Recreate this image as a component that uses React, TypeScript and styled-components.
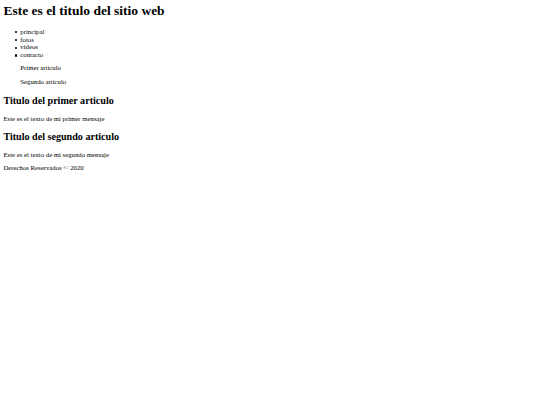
import styled, { createGlobalStyle } from "styled-components";

// The reference is a default-styled page shown at roughly 0.42 scale,
// so every default size below is the browser default times that factor.
const GlobalStyle = createGlobalStyle`
	body {
		margin: 3.4px;
		font-family: "Liberation Serif", "Times New Roman", serif;
		font-size: 6.75px;
		line-height: 1.15;
		color: #000;
		background: #fff;
	}
`;

const SiteTitle = styled.h1`
	font-size: 13.5px;
	font-weight: bold;
	margin: 0 0 9px;
`;

const NavList = styled.ul`
	list-style: none;
	margin: 6.75px 0 5px;
	padding-left: 16.9px;
`;

const NavItem = styled.li`
	position: relative;

	&::before {
		content: "";
		position: absolute;
		left: -5.5px;
		top: 3.3px;
		width: 2.2px;
		height: 2.2px;
		border-radius: 50%;
		background: #000;
	}
`;

const Aside = styled.aside`
	margin: 0 16.9px;

	p {
		margin: 5px 0 6.75px;
	}
`;

const Article = styled.article`
	h2 {
		font-size: 10.1px;
		font-weight: bold;
		margin: 8.4px 0;
	}

	p {
		margin: 6.75px 0 6px;
	}
`;

const Footer = styled.footer`
	p {
		margin: 5.5px 0;
	}
`;

const links = ["principal", "fotos", "videos", "contacto"];

const articles = [
	{ title: "Titulo del primer articulo", text: "Este es el texto de mi primer mensaje" },
	{ title: "Titulo del segundo articulo", text: "Este es el texto de mi segundo mensaje" },
];

export default function App() {
	return (
		<>
			<GlobalStyle />
			<header>
				<SiteTitle>Este es el titulo del sitio web</SiteTitle>
			</header>
			<nav>
				<NavList>
					{links.map((link) => (
						<NavItem key={link}>{link}</NavItem>
					))}
				</NavList>
			</nav>
			<Aside>
				<p>Primer articulo</p>
				<p>Segundo articulo</p>
			</Aside>
			{articles.map((a) => (
				<Article key={a.title}>
					<h2>{a.title}</h2>
					<p>{a.text}</p>
				</Article>
			))}
			<Footer>
				<p>Derechos Reservados © 2020</p>
			</Footer>
		</>
	);
}
